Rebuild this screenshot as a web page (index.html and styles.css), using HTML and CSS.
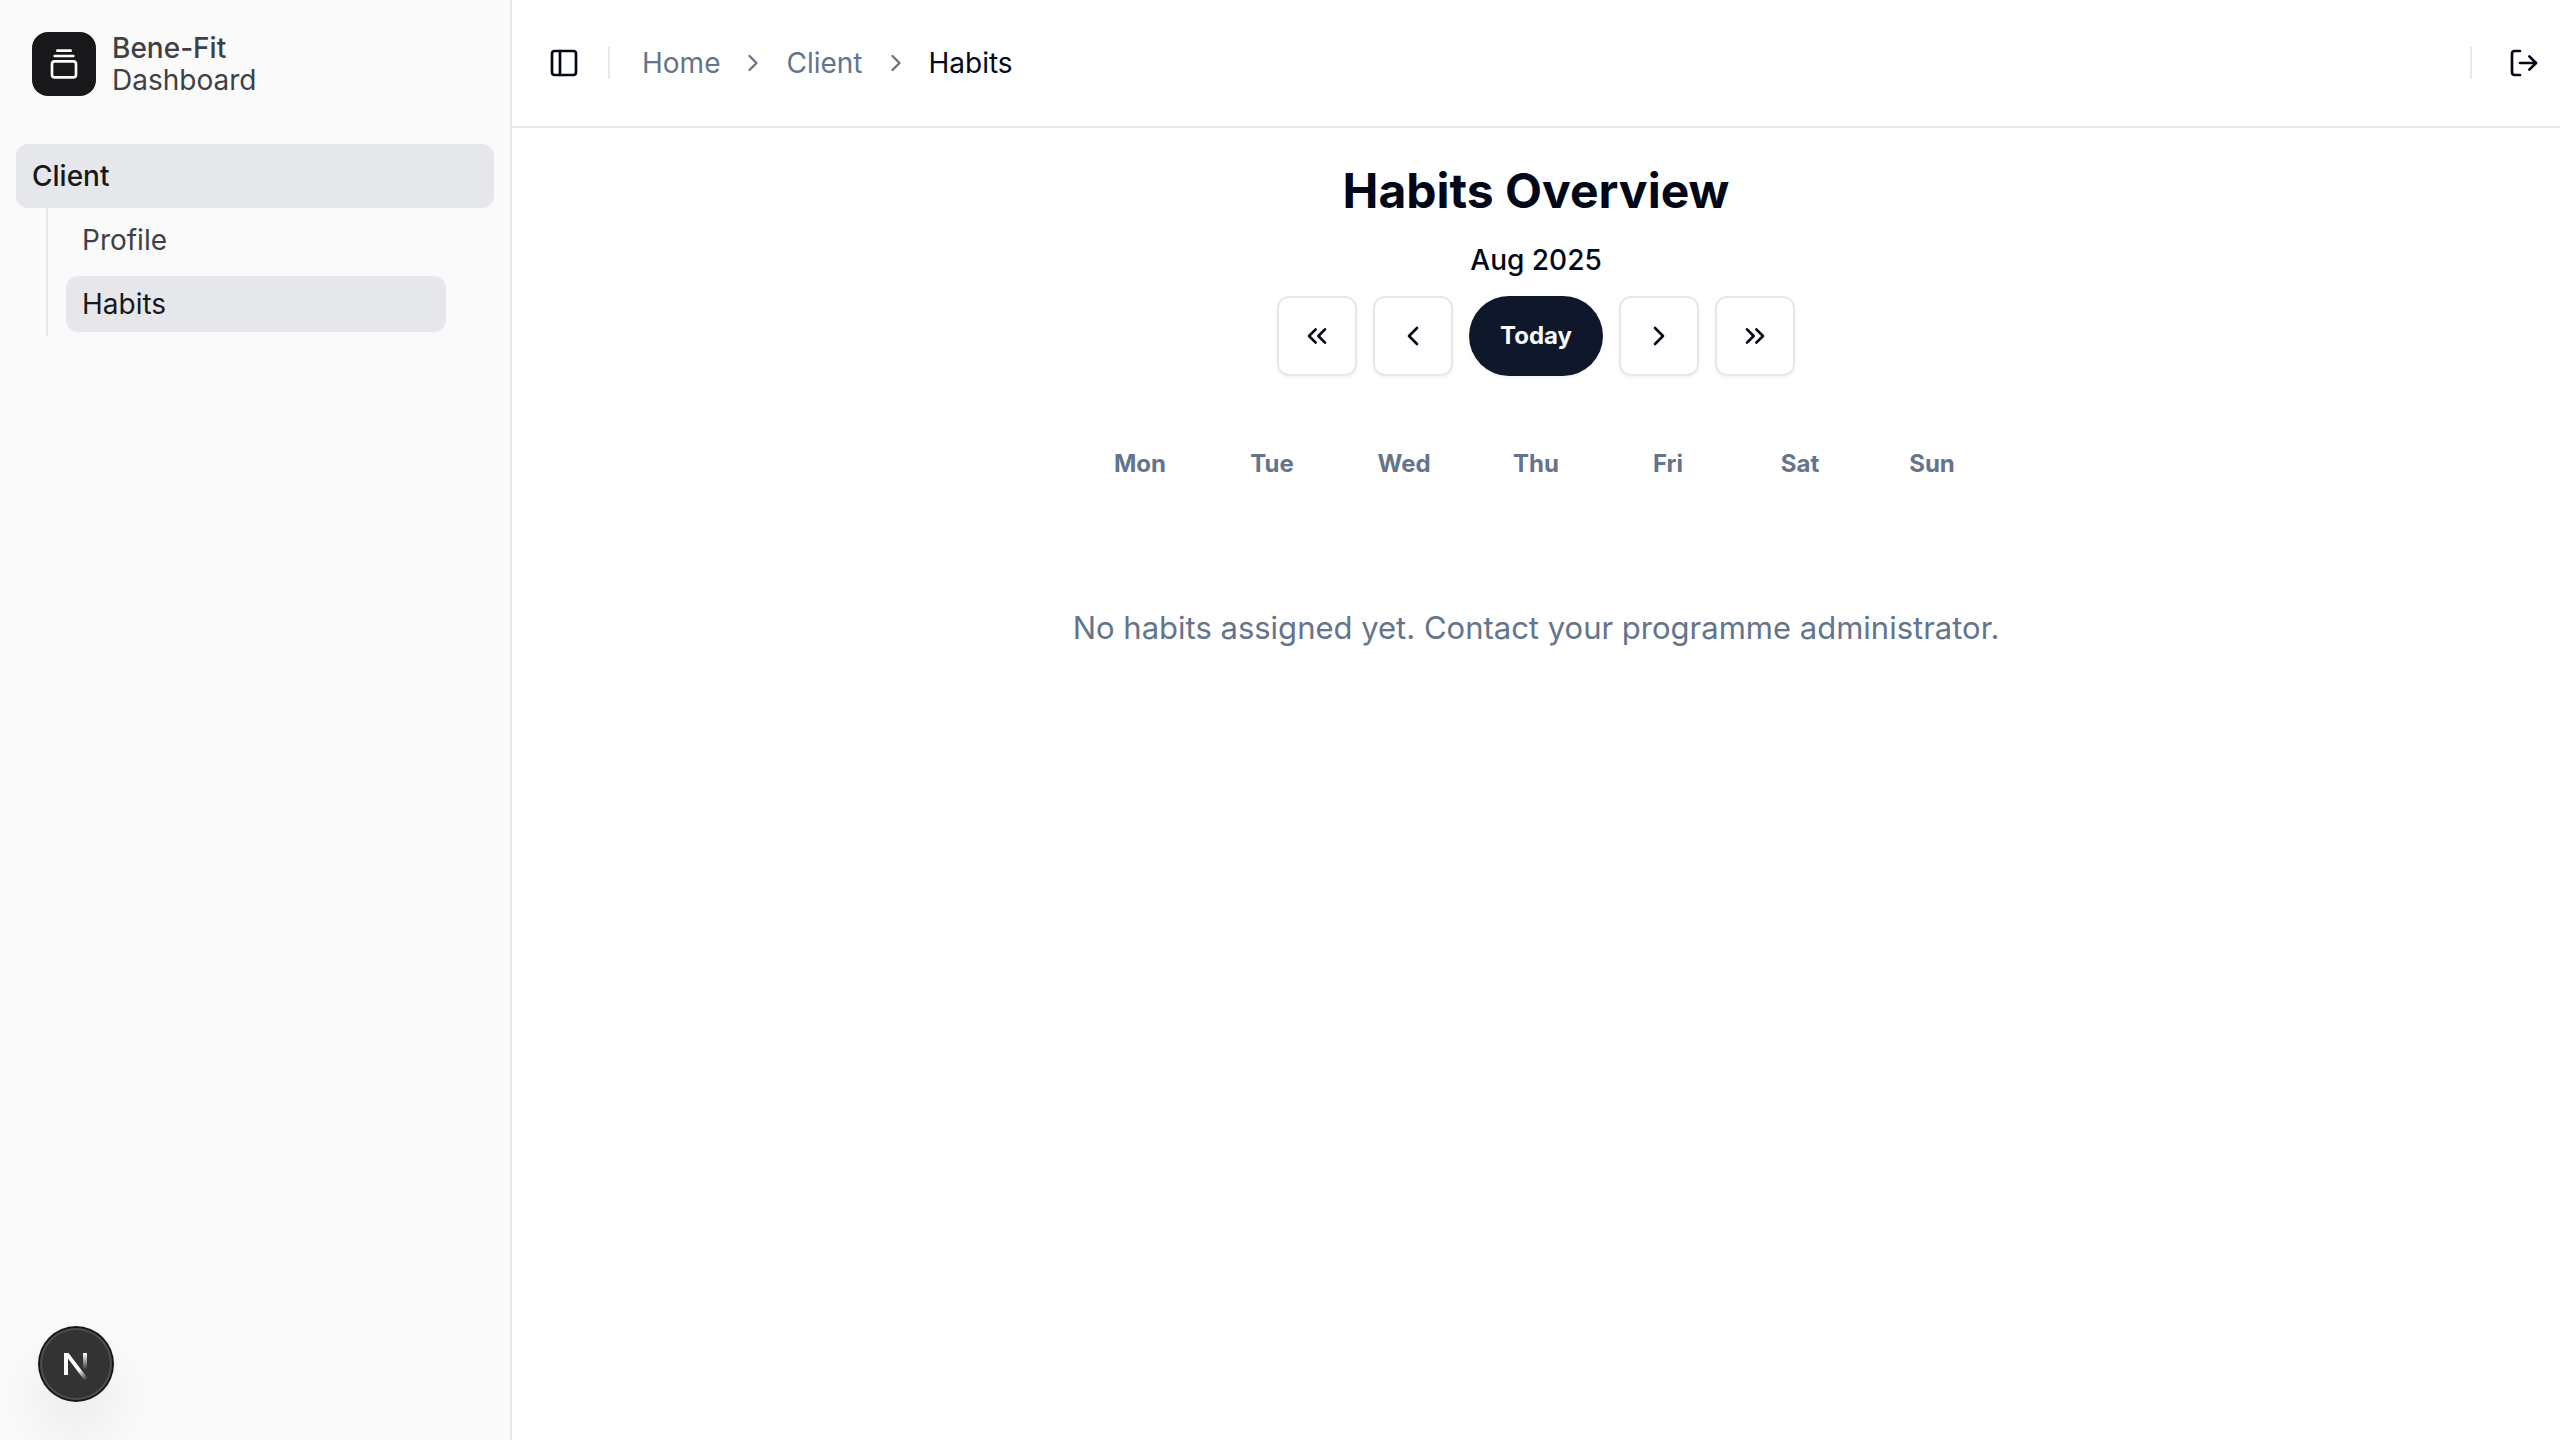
FILE: index.html
```html
<!DOCTYPE html>
<html lang="en">
<head>
<meta charset="utf-8">
<meta name="viewport" content="width=device-width, initial-scale=1">
<title>Bene-Fit Dashboard</title>
<link rel="stylesheet" href="styles.css">
</head>
<body>
<div class="app">
  <aside class="sidebar">
    <a class="brand" href="#">
      <span class="brand-mark">
        <svg class="icon" viewBox="0 0 24 24" aria-hidden="true"><path d="M7 2h10"/><path d="M5 6h14"/><rect width="18" height="12" x="3" y="10" rx="2"/></svg>
      </span>
      <span class="brand-text"><span class="brand-name">Bene-Fit</span><span>Dashboard</span></span>
    </a>
    <nav class="menu" aria-label="Main">
      <a class="menu-item" href="#">Client</a>
      <ul class="submenu">
        <li><a class="submenu-item" href="#">Profile</a></li>
        <li><a class="submenu-item is-active" href="#" aria-current="page">Habits</a></li>
      </ul>
    </nav>
  </aside>

  <div class="page">
    <header class="topbar">
      <button class="icon-button" type="button" aria-label="Toggle sidebar">
        <svg class="icon" viewBox="0 0 24 24" aria-hidden="true"><rect width="18" height="18" x="3" y="3" rx="2"/><path d="M9 3v18"/></svg>
      </button>
      <span class="divider"></span>
      <nav class="breadcrumb" aria-label="Breadcrumb">
        <a href="#">Home</a>
        <svg class="icon icon-small" viewBox="0 0 24 24" aria-hidden="true"><path d="m9 18 6-6-6-6"/></svg>
        <a href="#">Client</a>
        <svg class="icon icon-small" viewBox="0 0 24 24" aria-hidden="true"><path d="m9 18 6-6-6-6"/></svg>
        <span class="breadcrumb-current" aria-current="page">Habits</span>
      </nav>
      <div class="topbar-end">
        <span class="divider"></span>
        <button class="icon-button" type="button" aria-label="Log out">
          <svg class="icon" viewBox="0 0 24 24" aria-hidden="true"><path d="M9 21H5a2 2 0 0 1-2-2V5a2 2 0 0 1 2-2h4"/><path d="m16 17 5-5-5-5"/><path d="M21 12H9"/></svg>
        </button>
      </div>
    </header>

    <main class="content">
      <h1 class="title">Habits Overview</h1>
      <p class="month">Aug 2025</p>
      <div class="pager">
        <button class="pager-button" type="button" aria-label="Back one month"><svg class="icon" viewBox="0 0 24 24" aria-hidden="true"><path d="m11 17-5-5 5-5"/><path d="m18 17-5-5 5-5"/></svg></button>
        <button class="pager-button" type="button" aria-label="Back one week"><svg class="icon" viewBox="0 0 24 24" aria-hidden="true"><path d="m15 18-6-6 6-6"/></svg></button>
        <button class="today-button" type="button">Today</button>
        <button class="pager-button" type="button" aria-label="Forward one week"><svg class="icon" viewBox="0 0 24 24" aria-hidden="true"><path d="m9 18 6-6-6-6"/></svg></button>
        <button class="pager-button" type="button" aria-label="Forward one month"><svg class="icon" viewBox="0 0 24 24" aria-hidden="true"><path d="m6 17 5-5-5-5"/><path d="m13 17 5-5-5-5"/></svg></button>
      </div>
      <div class="weekdays">
        <span>Mon</span><span>Tue</span><span>Wed</span><span>Thu</span><span>Fri</span><span>Sat</span><span>Sun</span>
      </div>
      <p class="empty">No habits assigned yet. Contact your programme administrator.</p>
    </main>
  </div>
</div>

<button class="dev-badge" type="button" aria-label="Open developer tools">
  <svg class="dev-logo" viewBox="0 0 40 40" fill="none" aria-hidden="true">
    <defs>
      <linearGradient id="stem" x1="0" y1="9" x2="0" y2="26" gradientUnits="userSpaceOnUse"><stop stop-color="#fff"/><stop offset="1" stop-color="#fff" stop-opacity="0"/></linearGradient>
      <linearGradient id="slash" x1="23" y1="26" x2="30" y2="36" gradientUnits="userSpaceOnUse"><stop stop-color="#fff"/><stop offset="1" stop-color="#fff" stop-opacity="0"/></linearGradient>
    </defs>
    <path d="M8 9h4.500L31.500 34l-3 2.500L12 14.500V31H8Z" fill="url(#slash)"/>
    <path d="M27 9h4v17h-4Z" fill="url(#stem)"/>
  </svg>
</button>
</body>
</html>
```

FILE: styles.css
```css
:root {
  --ink: #020817;
  --muted: #64748b;
  --line: #e2e8f0;
  --side-text: #3f3f46;
  --side-ink: #18181b;
  --side-active: #e5e7eb;
}

* { box-sizing: border-box; }

body {
  margin: 0;
  background: #fff;
  color: var(--ink);
  font-family: Inter, "Liberation Sans", sans-serif;
  font-size: 28px;
  line-height: 40px;
}

a { color: inherit; text-decoration: none; }
h1, p, ul { margin: 0; padding: 0; }
ul { list-style: none; }

button {
  padding: 0;
  border: 0;
  background: none;
  color: inherit;
  font: inherit;
  cursor: pointer;
}

.icon {
  display: block;
  flex: none;
  width: 32px;
  height: 32px;
  fill: none;
  stroke: currentColor;
  stroke-width: 2;
  stroke-linecap: round;
  stroke-linejoin: round;
}

.icon-small { width: 28px; height: 28px; }

.app { display: flex; min-height: 100vh; }

/* Sidebar */
.sidebar {
  flex: none;
  width: 512px;
  padding: 16px;
  border-right: 2px solid var(--line);
  background: #fafafa;
  color: var(--side-text);
}

.brand {
  display: flex;
  align-items: center;
  gap: 16px;
  padding: 16px;
}

.brand-mark {
  display: grid;
  place-items: center;
  width: 64px;
  height: 64px;
  border-radius: 16px;
  background: var(--side-ink);
  color: #fafafa;
}

.brand-text { display: flex; flex-direction: column; line-height: 32px; }
.brand-name { font-weight: 500; }

.menu { margin-top: 32px; }

.menu-item {
  display: flex;
  align-items: center;
  height: 64px;
  padding: 0 16px;
  border-radius: 12px;
  background: var(--side-active);
  color: var(--side-ink);
  font-weight: 500;
}

.submenu {
  display: flex;
  flex-direction: column;
  gap: 8px;
  margin: 0 48px 0 30px;
  padding: 4px 0 4px 18px;
  border-left: 2px solid var(--side-active);
}

.submenu-item {
  display: flex;
  align-items: center;
  height: 56px;
  padding: 0 16px;
  border-radius: 12px;
}

.submenu-item.is-active { background: var(--side-active); color: var(--side-ink); }

/* Page */
.page { flex: 1; min-width: 0; }

.topbar {
  display: flex;
  align-items: center;
  height: 128px;
  padding: 0 8px 0 24px;
  border-bottom: 2px solid var(--line);
}

.icon-button {
  display: grid;
  place-items: center;
  width: 56px;
  height: 56px;
  border-radius: 12px;
}

.divider { width: 2px; height: 32px; background: var(--line); }

.topbar > .divider { margin: 0 32px 0 16px; }

.breadcrumb {
  display: flex;
  align-items: center;
  gap: 19px;
  color: var(--muted);
}

.breadcrumb-current { color: var(--ink); }

.topbar-end {
  display: flex;
  align-items: center;
  gap: 24px;
  margin-left: auto;
}

.content {
  display: flex;
  flex-direction: column;
  align-items: center;
  padding: 32px;
}

.title { font-size: 48px; line-height: 62px; font-weight: 700; }
.month { margin-top: 18px; font-weight: 500; }

.pager { display: flex; gap: 16px; margin-top: 16px; }

.pager-button,
.today-button {
  height: 80px;
  box-shadow: 0 2px 4px rgb(0 0 0 / 5%);
}

.pager-button {
  display: grid;
  place-items: center;
  width: 80px;
  border: 2px solid var(--line);
  border-radius: 12px;
}

.today-button {
  padding: 0 31px;
  border-radius: 40px;
  background: #0f172a;
  color: #f8fafc;
  font-size: 24px;
  line-height: 32px;
  font-weight: 700;
}

.weekdays {
  display: grid;
  grid-template-columns: repeat(7, 132px);
  margin-top: 72px;
  color: var(--muted);
  font-size: 24px;
  line-height: 32px;
  font-weight: 700;
  text-align: center;
}

.empty {
  margin-top: 124px;
  color: var(--muted);
  font-size: 31px;
  line-height: 48px;
}

/* Floating developer badge */
.dev-badge {
  position: fixed;
  left: 40px;
  bottom: 40px;
  display: grid;
  place-items: center;
  width: 72px;
  height: 72px;
  border-radius: 50%;
  background: #333;
  box-shadow: 0 0 0 2px #171717, inset 0 0 0 2px #4d4d4d, 0 32px 64px -16px rgb(0 0 0 / 24%);
}

.dev-logo { width: 40px; height: 40px; }
```
